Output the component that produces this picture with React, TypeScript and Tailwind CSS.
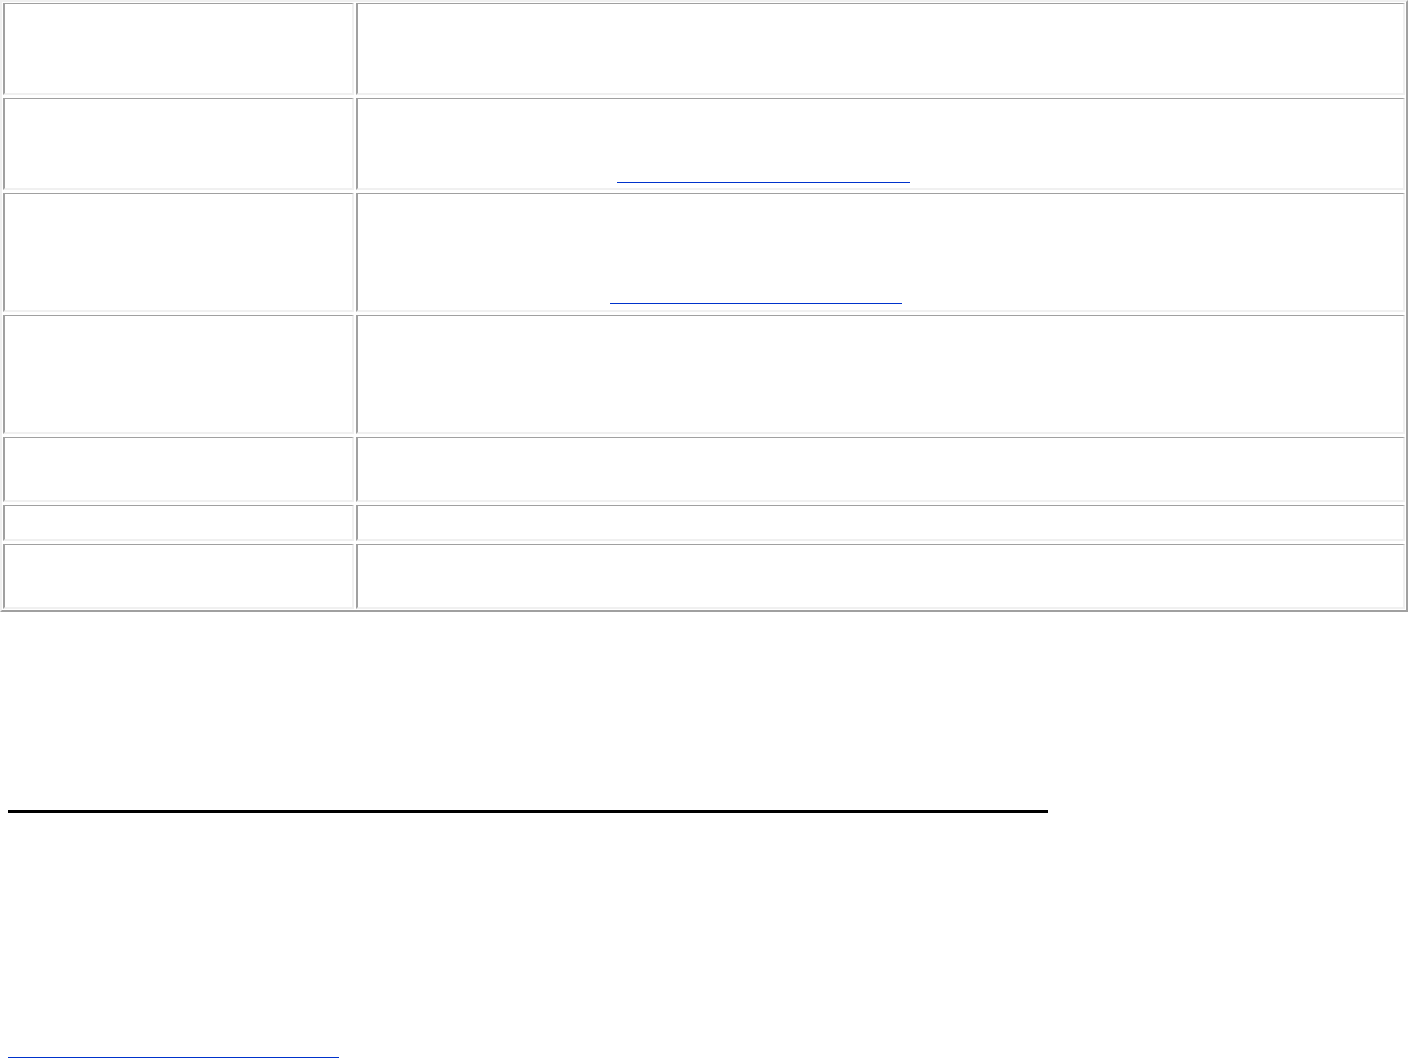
import React from "react";

const rows: { h: number; link?: { ml: number; w: number; pb: number } }[] = [
  { h: 92 },
  { h: 92, link: { ml: 259, w: 293, pb: 5 } },
  { h: 119, link: { ml: 252, w: 292, pb: 6 } },
  { h: 119 },
  { h: 65 },
  { h: 36 },
  { h: 65 },
];

function Cell({ h, children }: { h: number; children?: React.ReactNode }) {
  return (
    <div
      className="flex flex-col justify-end border-l-2 border-t border-r-2 border-b-2 border-l-[#a0a0a0] border-t-[#a0a0a0] border-r-[#f0f0f0] border-b-[#f0f0f0] bg-white"
      style={{ height: h }}
    >
      {children}
    </div>
  );
}

export default function App() {
  return (
    <div className="w-[1408px] bg-white font-['Liberation_Serif',serif]">
      <div className="border-2 border-t-[#f0f0f0] border-l-[#f0f0f0] border-r-[#a0a0a0] border-b-[#a0a0a0] p-px">
        <div className="grid grid-cols-[351px_1049px] gap-x-[2px] gap-y-[3px]">
          {rows.map((r, i) => (
            <React.Fragment key={i}>
              <Cell h={r.h} />
              <Cell h={r.h}>
                {r.link && (
                  <a
                    href="#"
                    className="block h-px overflow-hidden bg-[#0033cc] text-[0px]"
                    style={{ marginLeft: r.link.ml, width: r.link.w, marginBottom: r.link.pb }}
                    aria-label="link"
                  >
                    {"\u00a0"}
                  </a>
                )}
              </Cell>
            </React.Fragment>
          ))}
        </div>
      </div>
      <div className="mt-[198px] ml-[8px] h-[3px] w-[1040px] bg-black" />
      <div className="mt-[244px] ml-[8px] h-px w-[331px] bg-[#0033cc]" />
    </div>
  );
}
